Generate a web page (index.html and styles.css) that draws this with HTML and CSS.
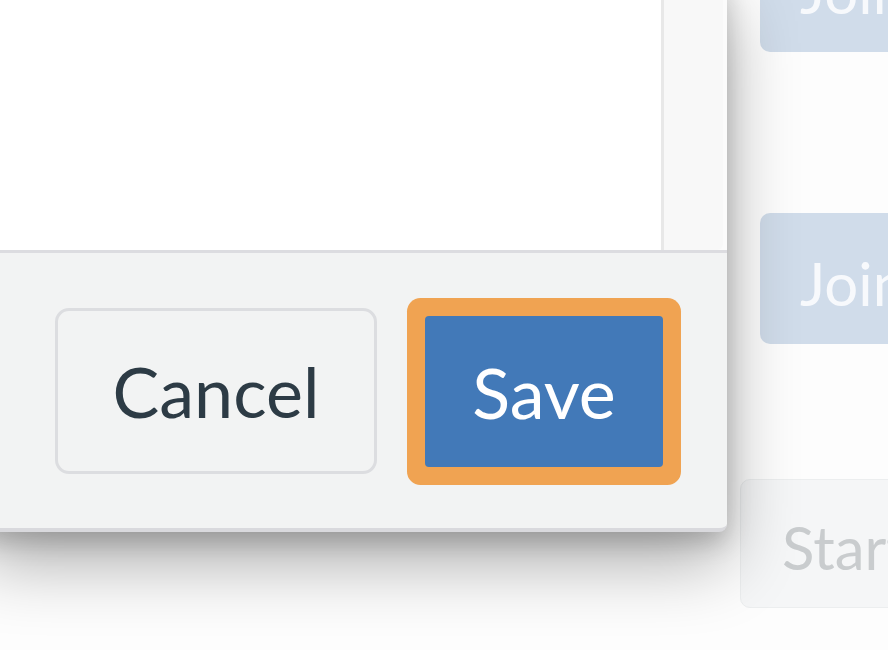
FILE: index.html
```html
<!DOCTYPE html>
<html lang="en">
<head>
<meta charset="utf-8">
<title>Modal footer</title>
<link rel="stylesheet" href="styles.css">
</head>
<body>
<div class="page">
  <div class="side">
    <div class="side-btn join first">Join</div>
    <div class="side-btn join">Join</div>
    <div class="side-btn start">Start</div>
  </div>
</div>
<div class="modal">
  <div class="modal-body">
    <div class="content"></div>
    <div class="gutter"></div>
  </div>
  <div class="modal-footer">
    <button class="btn cancel">Cancel</button>
    <button class="btn save">Save</button>
  </div>
</div>
</body>
</html>
```
FILE: styles.css
```css
html, body {
  margin: 0;
  padding: 0;
}
body {
  width: 888px;
  height: 650px;
  overflow: hidden;
  background: #fdfdfd;
  font-family: Lato, "Noto Sans", sans-serif;
  position: relative;
}
.page {
  height: 650px;
  display: flex;
  justify-content: flex-end;
}
.side {
  width: 148px;
  display: flex;
  flex-direction: column;
  margin-top: -79px;
}
.side-btn {
  box-sizing: border-box;
  height: 131px;
  border-radius: 10px;
  font-size: 60px;
  line-height: 1;
  display: flex;
  align-items: center;
  white-space: nowrap;
  overflow: hidden;
}
.join {
  margin-left: 20px;
  width: 200px;
  background: #d0dcea;
  color: #f7f9fc;
  padding-left: 40px;
  padding-top: 8px;
}
.join.first {
  margin-bottom: 161px;
}
.start {
  margin-top: 135px;
  width: 220px;
  height: 129px;
  background: #f5f6f7;
  border: 1px solid #eceeef;
  color: #c9ccce;
  padding-left: 41px;
  padding-top: 6px;
}
.modal {
  position: absolute;
  left: -20px;
  top: -20px;
  width: 747px;
  box-sizing: border-box;
  border-bottom: 4px solid #d9d9dd;
  border-radius: 0 0 8px 8px;
  background: #f2f3f3;
  box-shadow: 0 30px 70px rgba(0, 0, 0, 0.32), 0 10px 24px rgba(0, 0, 0, 0.18);
}
.modal-body {
  height: 270px;
  display: flex;
  background: #fbfbfb;
  padding-right: 4px;
}
.content {
  flex: 1;
  background: #ffffff;
  border-right: 3px solid #e8e8e8;
}
.gutter {
  width: 59px;
  background: #f8f8f8;
  border-bottom-right-radius: 6px;
}
.modal-footer {
  height: 275px;
  border-top: 3px solid #dcdce0;
  display: flex;
  align-items: center;
  justify-content: flex-end;
  gap: 48px;
  padding-right: 64px;
}
.btn {
  font-family: Lato, "Noto Sans", sans-serif;
  font-size: 70px;
  line-height: 1;
  cursor: pointer;
  box-sizing: border-box;
  padding: 0;
  margin: 0;
}
.cancel {
  width: 322px;
  height: 166px;
  background: #f2f3f3;
  border: 3px solid #dcdde0;
  border-radius: 14px;
  color: #2d3b45;
  margin-top: 1px;
}
.save {
  width: 238px;
  height: 151px;
  background: #4279b8;
  border: none;
  border-radius: 4px;
  color: #ffffff;
  box-shadow: 0 0 0 18px #f0a352;
  margin-top: 2px;
}
```
